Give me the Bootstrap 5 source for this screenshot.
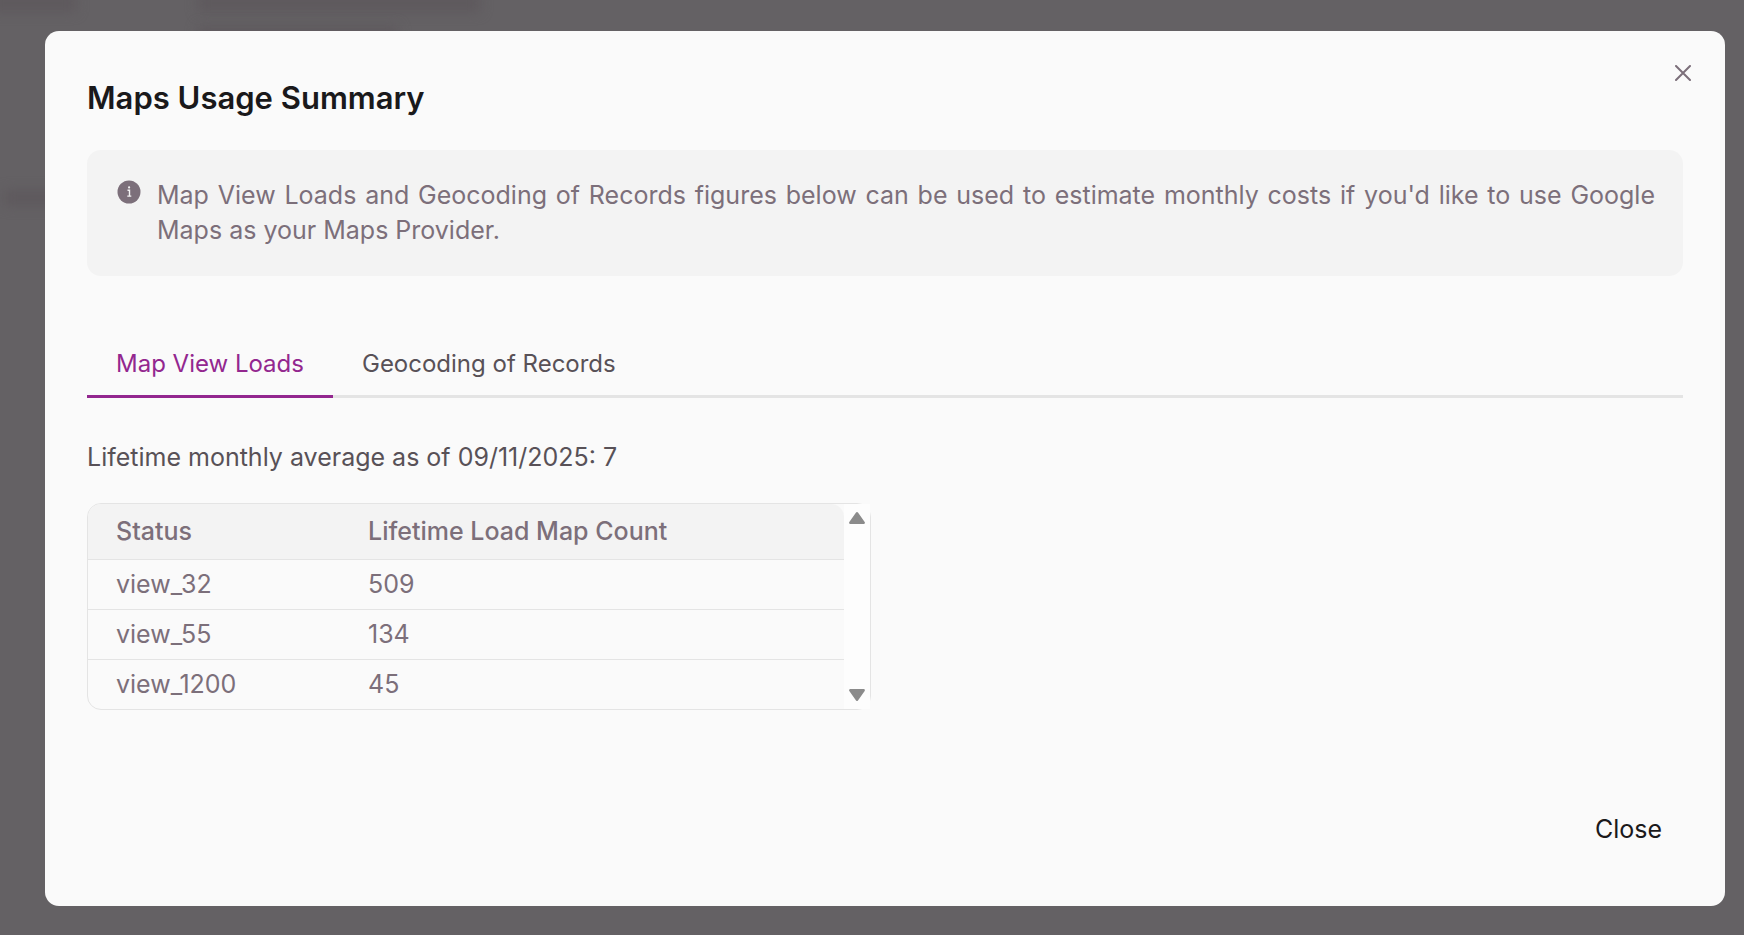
<!DOCTYPE html>
<html lang="en">
<head>
<meta charset="utf-8">
<meta name="viewport" content="width=device-width, initial-scale=1">
<title>Maps Usage Summary</title>
<link href="https://cdn.jsdelivr.net/npm/bootstrap@5.3.0/dist/css/bootstrap.min.css" rel="stylesheet">
<style>
  :root { --muted: #7c6f7a; --ink: #1a191b; --body: #585157; --line: #e4e4e4; --accent: #93278f; }
  body { font-family: Inter, "Liberation Sans", sans-serif; font-size: 25px; line-height: 35px; color: var(--body); background: #646164; }
  .overlay { min-height: 100vh; padding: 31px 19px 29px 45px; overflow: hidden; }
  /* dimmed page content behind the dialog */
  .shade { position: absolute; background: #5e595d; filter: blur(6px); }
  .shade-a { left: -10px; top: -6px; width: 86px; height: 18px; }
  .shade-b { left: 198px; top: -6px; width: 282px; height: 18px; }
  .shade-c { left: 198px; top: 26px; width: 200px; height: 18px; }
  .shade-d { left: 4px; top: 190px; width: 60px; height: 16px; }
  .modal-content { min-height: 875px; background: #fafafa; border: 0; border-radius: 14px; padding: 42px; color: inherit; }
  .dismiss { position: absolute; top: 26px; right: 26px; width: 32px; height: 32px; line-height: 0; color: var(--muted); }
  .modal-title { font-size: 31px; line-height: 50px; font-weight: 600; color: var(--ink); margin-bottom: 27px; }
  .notice { background: #f3f3f3; color: var(--muted); border: 0; border-radius: 14px; padding: 28px; gap: 16px; margin-bottom: 57px; }
  .notice svg { margin-top: 2px; }
  .notice p { text-align: justify; }
  .nav-tabs { --bs-nav-tabs-border-width: 0; border-bottom: 3px solid var(--line); margin-bottom: 42px; }
  .nav-tabs .nav-link { font-size: 24px; padding: 13px 29px 14px; margin-bottom: -3px; border: 0; border-bottom: 3px solid transparent; border-radius: 0; color: var(--body); background: none; }
  .nav-tabs .nav-link.active { color: var(--accent); background: none; border-color: var(--accent); }
  .average { margin-bottom: 28px; }
  .usage { width: 784px; max-width: 100%; border: 1px solid var(--line); border-radius: 14px; }
  .usage table { --bs-table-bg: transparent; color: var(--muted); }
  .usage th, .usage td { padding: 7px 28px; color: var(--muted); border-color: var(--line); }
  .usage th { font-weight: 500; background: #f3f3f3; padding: 10px 28px; }
  .usage th:first-child { width: 252px; border-top-left-radius: 13px; }
  .usage th:last-child { border-top-right-radius: 13px; }
  .usage tbody tr:last-child td { border-bottom: 0; }
  .scroller { width: 26px; background: #fdfdfd; padding: 8px 5px; color: #8b8b8b; }
  .scroller button, .dismiss { border: 0; background: none; padding: 0; }
  .scroller button { line-height: 0; color: inherit; }
  .modal-footer { padding: 0; border: 0; margin-top: auto; }
  .btn-close-text { font-size: 25px; line-height: 35px; font-weight: 400; padding: 16px 21px 17px; margin: 0; border: 0; color: var(--ink); }
</style>
</head>
<body>
<div class="overlay position-relative">
  <div class="shade shade-a"></div>
  <div class="shade shade-b"></div>
  <div class="shade shade-c"></div>
  <div class="shade shade-d"></div>

  <div class="modal-content" role="dialog" aria-labelledby="dialogTitle">
    <button class="dismiss" type="button" aria-label="Close dialog">
      <svg width="16" height="16" viewBox="0 0 16 16" fill="none" stroke="currentColor" stroke-width="2" stroke-linecap="round"><path d="M1 1l14 14M15 1L1 15"/></svg>
    </button>
    <h1 class="modal-title" id="dialogTitle">Maps Usage Summary</h1>

    <div class="notice d-flex align-items-start" role="note">
      <svg class="flex-shrink-0" width="26" height="24" viewBox="0 0 26 24"><circle cx="14" cy="12" r="11.5" fill="#7c6f7a"/><path d="M12.5 10.3h2v5.7M12.3 16.1h4" fill="none" stroke="#f3f3f3" stroke-width="1.4"/><circle cx="14.1" cy="7.4" r="1.1" fill="#f3f3f3"/></svg>
      <p class="mb-0 flex-grow-1">Map View Loads and Geocoding of Records figures below can be used to estimate monthly costs if you'd like to use Google Maps as your Maps Provider.</p>
    </div>

    <ul class="nav nav-tabs" role="tablist">
      <li class="nav-item" role="presentation"><button class="nav-link active" type="button" role="tab" aria-selected="true">Map View Loads</button></li>
      <li class="nav-item" role="presentation"><button class="nav-link" type="button" role="tab" aria-selected="false">Geocoding of Records</button></li>
    </ul>

    <p class="average">Lifetime monthly average as of 09/11/2025: 7</p>

    <div class="usage d-flex">
      <table class="table mb-0 flex-grow-1">
        <thead><tr><th scope="col">Status</th><th scope="col">Lifetime Load Map Count</th></tr></thead>
        <tbody>
          <tr><td>view_32</td><td>509</td></tr>
          <tr><td>view_55</td><td>134</td></tr>
          <tr><td>view_1200</td><td>45</td></tr>
        </tbody>
      </table>
      <div class="scroller d-flex flex-column justify-content-between flex-shrink-0">
        <button type="button" aria-label="Scroll up"><svg width="16" height="12" viewBox="0 0 16 12"><path d="M8 1.3L14.7 10.7H1.3z" fill="currentColor" stroke="currentColor" stroke-width="2.4" stroke-linejoin="round"/></svg></button>
        <button type="button" aria-label="Scroll down"><svg width="16" height="12" viewBox="0 0 16 12"><path d="M8 10.7L1.3 1.3H14.7z" fill="currentColor" stroke="currentColor" stroke-width="2.4" stroke-linejoin="round"/></svg></button>
      </div>
    </div>

    <div class="modal-footer">
      <button class="btn btn-close-text" type="button">Close</button>
    </div>
  </div>
</div>
<script src="https://cdn.jsdelivr.net/npm/bootstrap@5.3.0/dist/js/bootstrap.bundle.min.js"></script>
</body>
</html>
